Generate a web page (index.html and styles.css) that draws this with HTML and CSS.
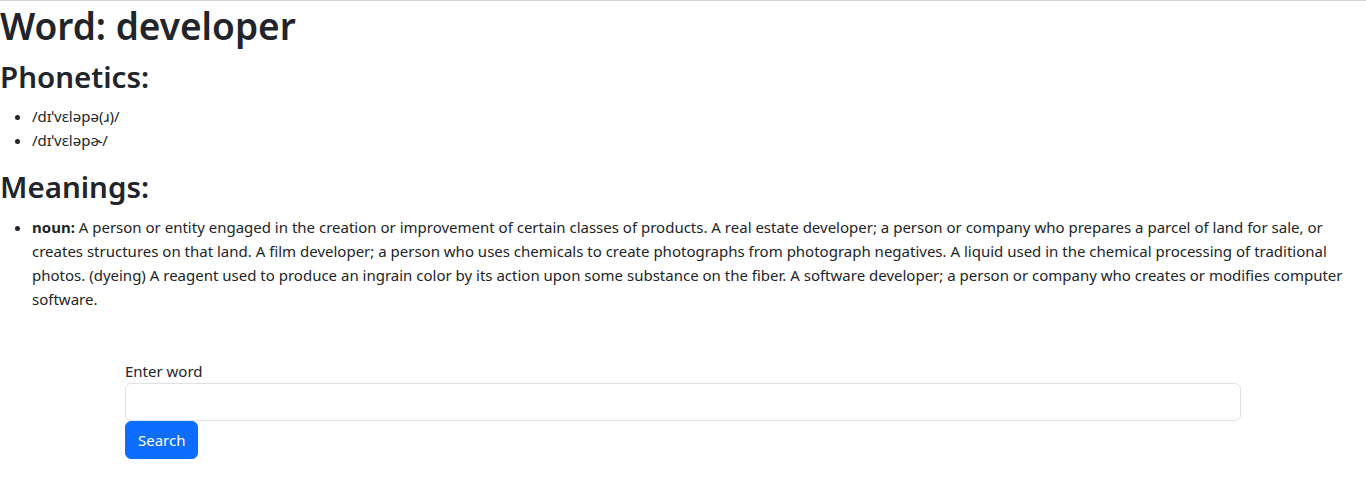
FILE: index.html
```html
<!DOCTYPE html>
<html lang="en">
<head>
<meta charset="utf-8">
<title>Dictionary</title>
<link rel="stylesheet" href="styles.css">
</head>
<body>
<div class="top-rule"></div>
<div class="result">
  <h1 class="title">Word: developer</h1>
  <h2 class="section">Phonetics:</h2>
  <ul class="list">
    <li>/dɪˈvɛləpə(ɹ)/</li>
    <li>/dɪˈvɛləpɚ/</li>
  </ul>
  <h2 class="section">Meanings:</h2>
  <ul class="list">
    <li><strong>noun:</strong> A person or entity engaged in the creation or improvement of certain classes of products. A real estate developer; a person or company who prepares a parcel of land for sale, or creates structures on that land. A film developer; a person who uses chemicals to create photographs from photograph negatives. A liquid used in the chemical processing of traditional photos. (dyeing) A reagent used to produce an ingrain color by its action upon some substance on the fiber. A software developer; a person or company who creates or modifies computer software.</li>
  </ul>
</div>
<div class="container">
  <form class="search-form">
    <label class="label" for="word">Enter word</label>
    <input class="input" id="word" type="text">
    <button class="btn" type="button">Search</button>
  </form>
</div>
</body>
</html>
```
FILE: styles.css
```css
* { box-sizing: border-box; }
html, body { margin: 0; padding: 0; }
body {
  font-family: "Noto Sans", "Segoe UI", Arial, sans-serif;
  font-size: 16px;
  line-height: 1.5;
  color: #212529;
  background: #fff;
}
.top-rule {
  height: 2px;
  border-top: 1px solid #d4d4d4;
}
.title {
  margin: 0 0 8px;
  font-size: 37px;
  font-weight: 600;
  line-height: 48px;
}
.section {
  margin: 0 0 8px;
  font-size: 29.5px;
  font-weight: 600;
  line-height: 38.4px;
}
.list {
  margin: 0 0 16px;
  padding-left: 32px;
}
.list li { font-size: 15px; line-height: 24px; }
.list strong { font-weight: 700; }
.container {
  width: 1140px;
  margin: 0 auto;
  padding: 32px 12px 0;
}
.search-form {
  display: flex;
  flex-direction: column;
  align-items: flex-start;
  font-size: 15px;
}
.label { display: block; line-height: 24px; }
.input {
  display: block;
  width: 100%;
  height: 38px;
  padding: 6px 12px;
  font: inherit;
  border: 1px solid #dee2e6;
  border-radius: 6px;
  background: #fff;
}
.btn {
  height: 38px;
  padding: 6px 12px;
  font: inherit;
  color: #fff;
  background: #0d6efd;
  border: 1px solid #0d6efd;
  border-radius: 6px;
}
```
